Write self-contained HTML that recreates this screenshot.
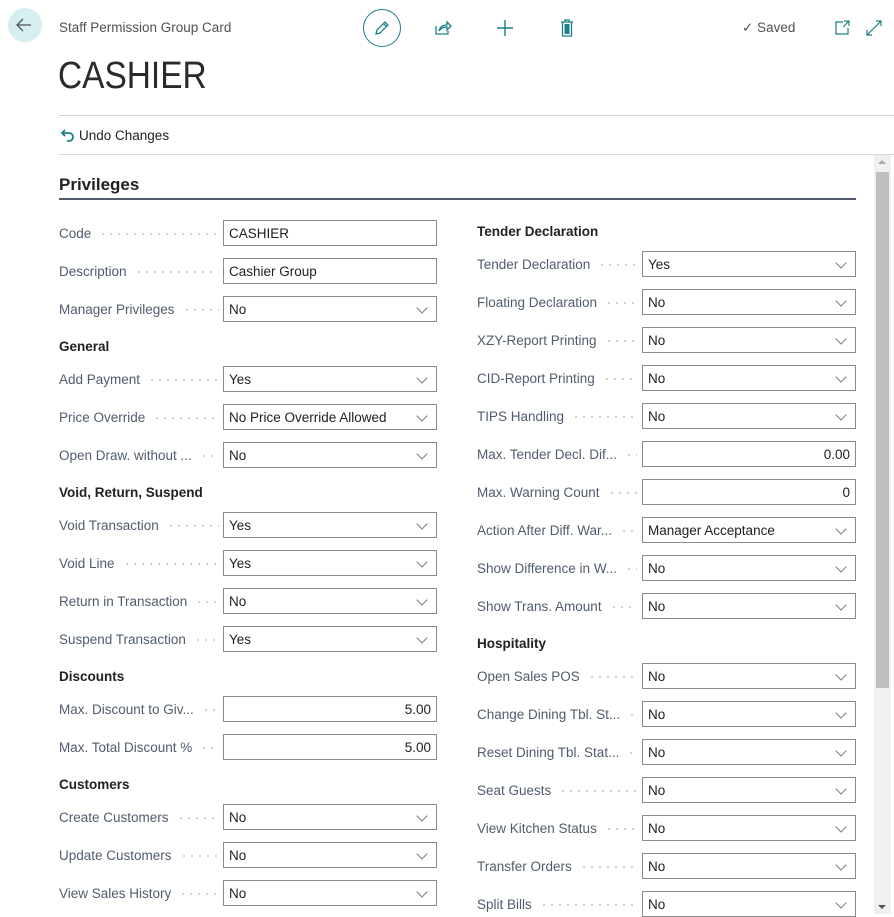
<!DOCTYPE html>
<html><head><meta charset="utf-8"><style>
*{box-sizing:border-box;margin:0;padding:0}
body{width:894px;height:914px;overflow:hidden;background:#fff;font-family:"Liberation Sans",sans-serif;position:relative;color:#212121}
.a{position:absolute}
.r{position:absolute;height:26px;display:flex;align-items:center;font-size:13.5px}
.lab{color:#505c6d;white-space:nowrap;display:flex;align-items:center;height:26px}
.dots{height:26px;background:radial-gradient(circle,#c4c4c4 0.8px,transparent 1.1px) 0 13px/8px 2px repeat-x}
.in{position:absolute;height:26px;border:1px solid #8a8a8a;padding:0 5px;display:flex;align-items:center;font-size:13.5px;color:#212121;background:#fff}
.in.s::after{content:"";position:absolute;right:10px;top:7px;width:7px;height:7px;border-right:1px solid #777;border-bottom:1px solid #777;transform:rotate(45deg)}
.in.n{justify-content:flex-end}
.h{position:absolute;font-size:13.5px;font-weight:bold;color:#212121}
</style></head><body>
<div class="a" style="left:8px;top:8px;width:34px;height:34px;border-radius:50%;background:#d6eef0"></div>
<svg class="a" style="left:14px;top:16px" width="20" height="18"><path d="M17 9H3M9 3L3 9l6 6" stroke="#555" stroke-width="1.3" fill="none"/></svg>
<div class="a" style="left:59px;top:20px;font-size:13.5px;color:#505050">Staff Permission Group Card</div>
<div class="a" style="left:363px;top:9px;width:38px;height:38px;border-radius:50%;border:1.3px solid #1b7f86"></div>
<svg class="a" style="left:372px;top:18px" width="20" height="20"><path d="M4 16l1-4L13 4l3 3-8 8zM11.5 5.5l3 3" stroke="#1b7f86" stroke-width="1.3" fill="none"/></svg>
<svg class="a" style="left:433px;top:18px" width="20" height="20"><path d="M3 8v8h12v-3M6 13c1-4 4-6 8-6V4l4 4-4 4V9c-3 0-6 1-8 4z" stroke="#1b7f86" stroke-width="1.3" fill="none"/></svg>
<svg class="a" style="left:495px;top:18px" width="20" height="20"><path d="M10 2v16M2 10h16" stroke="#1b7f86" stroke-width="1.4"/></svg>
<svg class="a" style="left:557px;top:18px" width="20" height="20"><path d="M4 4h12M8 4V2h4v2M5.5 4v14h9V4" stroke="#1b7f86" stroke-width="1.3" fill="none"/><rect x="7.5" y="6" width="5" height="10" fill="#1b7f86"/></svg>
<div class="a" style="left:742px;top:20px;font-size:13.5px;color:#505050">✓ Saved</div>
<svg class="a" style="left:834px;top:20px" width="16" height="16"><path d="M9 2H2v12h12V8M10 1h5v5M15 1L9 7" stroke="#1b7f86" stroke-width="1.2" fill="none"/></svg>
<svg class="a" style="left:866px;top:20px" width="16" height="16"><path d="M1 15L15 1M10 1h5v5M6 15H1v-5" stroke="#1b7f86" stroke-width="1.2" fill="none"/></svg>
<div class="a" style="left:58px;top:55px;font-size:38px;font-weight:300;color:#2a2a2a;transform:scaleX(0.88);transform-origin:left">CASHIER</div>
<div class="a" style="left:59px;top:115px;width:835px;height:1px;background:#d0d0d0"></div>
<svg class="a" style="left:60px;top:127px" width="16" height="16"><path d="M5 3L2 6l3 3M2 6h7a4 4 0 010 8H7" stroke="#1b7f86" stroke-width="1.8" fill="none"/></svg>
<div class="a" style="left:79px;top:128px;font-size:13.5px;color:#212121">Undo Changes</div>
<div class="a" style="left:59px;top:154px;width:835px;height:1px;background:#d8d8d8"></div>
<div class="a" style="left:874px;top:155px;width:17px;height:759px;background:#f0f0f0"></div>
<div class="a" style="left:876px;top:172px;width:13px;height:516px;background:#bfbfbf"></div>
<div class="a" style="left:878px;top:160px;border:4px solid transparent;border-bottom:4px solid #aaa;border-top:0"></div>
<div class="a" style="left:878px;top:905px;border:4px solid transparent;border-top:4px solid #555;border-bottom:0"></div>
<div class="a" style="left:59px;top:175px;font-size:17px;font-weight:bold;color:#212121">Privileges</div>
<div class="a" style="left:59px;top:198px;width:797px;height:2px;background:#505a6a"></div>

<!-- left -->
<div class="r" style="left:59px;top:220px;width:160px"><span class="lab">Code</span><span class="dots" style="flex:1;margin-left:8px"></span></div><div class="in" style="left:223px;top:220px;width:214px">CASHIER</div>
<div class="r" style="left:59px;top:258px;width:160px"><span class="lab">Description</span><span class="dots" style="flex:1;margin-left:8px"></span></div><div class="in" style="left:223px;top:258px;width:214px">Cashier Group</div>
<div class="r" style="left:59px;top:296px;width:160px"><span class="lab">Manager Privileges</span><span class="dots" style="flex:1;margin-left:8px"></span></div><div class="in s" style="left:223px;top:296px;width:214px">No</div>
<div class="h" style="left:59px;top:339px">General</div>
<div class="r" style="left:59px;top:366px;width:160px"><span class="lab">Add Payment</span><span class="dots" style="flex:1;margin-left:8px"></span></div><div class="in s" style="left:223px;top:366px;width:214px">Yes</div>
<div class="r" style="left:59px;top:404px;width:160px"><span class="lab">Price Override</span><span class="dots" style="flex:1;margin-left:8px"></span></div><div class="in s" style="left:223px;top:404px;width:214px">No Price Override Allowed</div>
<div class="r" style="left:59px;top:442px;width:160px"><span class="lab">Open Draw. without ...</span><span class="dots" style="flex:1;margin-left:8px"></span></div><div class="in s" style="left:223px;top:442px;width:214px">No</div>
<div class="h" style="left:59px;top:485px">Void, Return, Suspend</div>
<div class="r" style="left:59px;top:512px;width:160px"><span class="lab">Void Transaction</span><span class="dots" style="flex:1;margin-left:8px"></span></div><div class="in s" style="left:223px;top:512px;width:214px">Yes</div>
<div class="r" style="left:59px;top:550px;width:160px"><span class="lab">Void Line</span><span class="dots" style="flex:1;margin-left:8px"></span></div><div class="in s" style="left:223px;top:550px;width:214px">Yes</div>
<div class="r" style="left:59px;top:588px;width:160px"><span class="lab">Return in Transaction</span><span class="dots" style="flex:1;margin-left:8px"></span></div><div class="in s" style="left:223px;top:588px;width:214px">No</div>
<div class="r" style="left:59px;top:626px;width:160px"><span class="lab">Suspend Transaction</span><span class="dots" style="flex:1;margin-left:8px"></span></div><div class="in s" style="left:223px;top:626px;width:214px">Yes</div>
<div class="h" style="left:59px;top:669px">Discounts</div>
<div class="r" style="left:59px;top:696px;width:160px"><span class="lab">Max. Discount to Giv...</span><span class="dots" style="flex:1;margin-left:8px"></span></div><div class="in n" style="left:223px;top:696px;width:214px">5.00</div>
<div class="r" style="left:59px;top:734px;width:160px"><span class="lab">Max. Total Discount %</span><span class="dots" style="flex:1;margin-left:8px"></span></div><div class="in n" style="left:223px;top:734px;width:214px">5.00</div>
<div class="h" style="left:59px;top:777px">Customers</div>
<div class="r" style="left:59px;top:804px;width:160px"><span class="lab">Create Customers</span><span class="dots" style="flex:1;margin-left:8px"></span></div><div class="in s" style="left:223px;top:804px;width:214px">No</div>
<div class="r" style="left:59px;top:842px;width:160px"><span class="lab">Update Customers</span><span class="dots" style="flex:1;margin-left:8px"></span></div><div class="in s" style="left:223px;top:842px;width:214px">No</div>
<div class="r" style="left:59px;top:880px;width:160px"><span class="lab">View Sales History</span><span class="dots" style="flex:1;margin-left:8px"></span></div><div class="in s" style="left:223px;top:880px;width:214px">No</div>

<!-- right -->
<div class="h" style="left:477px;top:224px">Tender Declaration</div>
<div class="r" style="left:477px;top:251px;width:160px"><span class="lab">Tender Declaration</span><span class="dots" style="flex:1;margin-left:8px"></span></div><div class="in s" style="left:642px;top:251px;width:214px">Yes</div>
<div class="r" style="left:477px;top:289px;width:160px"><span class="lab">Floating Declaration</span><span class="dots" style="flex:1;margin-left:8px"></span></div><div class="in s" style="left:642px;top:289px;width:214px">No</div>
<div class="r" style="left:477px;top:327px;width:160px"><span class="lab">XZY-Report Printing</span><span class="dots" style="flex:1;margin-left:8px"></span></div><div class="in s" style="left:642px;top:327px;width:214px">No</div>
<div class="r" style="left:477px;top:365px;width:160px"><span class="lab">CID-Report Printing</span><span class="dots" style="flex:1;margin-left:8px"></span></div><div class="in s" style="left:642px;top:365px;width:214px">No</div>
<div class="r" style="left:477px;top:403px;width:160px"><span class="lab">TIPS Handling</span><span class="dots" style="flex:1;margin-left:8px"></span></div><div class="in s" style="left:642px;top:403px;width:214px">No</div>
<div class="r" style="left:477px;top:441px;width:160px"><span class="lab">Max. Tender Decl. Dif...</span><span class="dots" style="flex:1;margin-left:8px"></span></div><div class="in n" style="left:642px;top:441px;width:214px">0.00</div>
<div class="r" style="left:477px;top:479px;width:160px"><span class="lab">Max. Warning Count</span><span class="dots" style="flex:1;margin-left:8px"></span></div><div class="in n" style="left:642px;top:479px;width:214px">0</div>
<div class="r" style="left:477px;top:517px;width:160px"><span class="lab">Action After Diff. War...</span><span class="dots" style="flex:1;margin-left:8px"></span></div><div class="in s" style="left:642px;top:517px;width:214px">Manager Acceptance</div>
<div class="r" style="left:477px;top:555px;width:160px"><span class="lab">Show Difference in W...</span><span class="dots" style="flex:1;margin-left:8px"></span></div><div class="in s" style="left:642px;top:555px;width:214px">No</div>
<div class="r" style="left:477px;top:593px;width:160px"><span class="lab">Show Trans. Amount</span><span class="dots" style="flex:1;margin-left:8px"></span></div><div class="in s" style="left:642px;top:593px;width:214px">No</div>
<div class="h" style="left:477px;top:636px">Hospitality</div>
<div class="r" style="left:477px;top:663px;width:160px"><span class="lab">Open Sales POS</span><span class="dots" style="flex:1;margin-left:8px"></span></div><div class="in s" style="left:642px;top:663px;width:214px">No</div>
<div class="r" style="left:477px;top:701px;width:160px"><span class="lab">Change Dining Tbl. St...</span><span class="dots" style="flex:1;margin-left:8px"></span></div><div class="in s" style="left:642px;top:701px;width:214px">No</div>
<div class="r" style="left:477px;top:739px;width:160px"><span class="lab">Reset Dining Tbl. Stat...</span><span class="dots" style="flex:1;margin-left:8px"></span></div><div class="in s" style="left:642px;top:739px;width:214px">No</div>
<div class="r" style="left:477px;top:777px;width:160px"><span class="lab">Seat Guests</span><span class="dots" style="flex:1;margin-left:8px"></span></div><div class="in s" style="left:642px;top:777px;width:214px">No</div>
<div class="r" style="left:477px;top:815px;width:160px"><span class="lab">View Kitchen Status</span><span class="dots" style="flex:1;margin-left:8px"></span></div><div class="in s" style="left:642px;top:815px;width:214px">No</div>
<div class="r" style="left:477px;top:853px;width:160px"><span class="lab">Transfer Orders</span><span class="dots" style="flex:1;margin-left:8px"></span></div><div class="in s" style="left:642px;top:853px;width:214px">No</div>
<div class="r" style="left:477px;top:891px;width:160px"><span class="lab">Split Bills</span><span class="dots" style="flex:1;margin-left:8px"></span></div><div class="in s" style="left:642px;top:891px;width:214px">No</div>
</body></html>
